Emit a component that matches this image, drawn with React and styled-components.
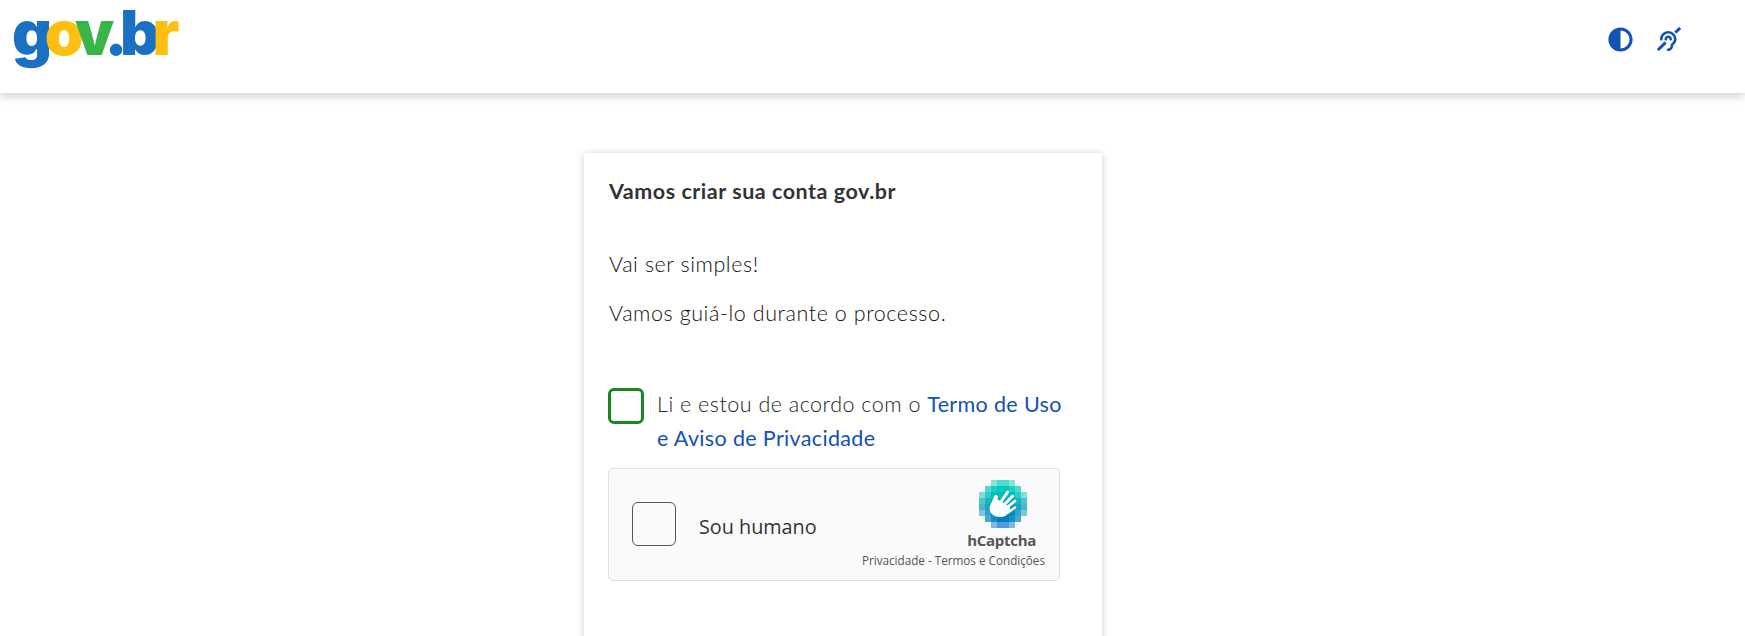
import React from "react";
import styled, { createGlobalStyle } from "styled-components";
import { FaAdjust, FaDeaf } from "react-icons/fa";

const GlobalStyle = createGlobalStyle`
  html, body {
    margin: 0;
    height: 100%;
    overflow: hidden;
    background: #fff;
  }
  * {
    box-sizing: border-box;
  }
`;

const Page = styled.div`
  height: 636px;
  overflow: hidden;
  font-family: Lato, "Open Sans", sans-serif;
  color: #333;
`;

const Header = styled.header`
  height: 93px;
  display: flex;
  justify-content: space-between;
  padding: 0 64px 0 12px;
  background: #fff;
  box-shadow: 0 3px 9px rgba(0, 0, 0, 0.2);
`;

const Logo = styled.div`
  font-family: Inter, "Liberation Sans", sans-serif;
  font-size: 62px;
  font-weight: 900;
  line-height: 66px;
  letter-spacing: -7.5px;
`;

const LogoPart = styled.span`
  color: ${(p) => p.$color};
`;

const Tools = styled.div`
  display: flex;
  gap: 24px;
  padding-top: 27px;
  color: #1351b4;
  font-size: 24px;
`;

const ContrastIcon = styled(FaAdjust)`
  font-size: 25px;
`;

const Main = styled.main`
  padding: 60px 0 0 584px;
`;

const Card = styled.section`
  width: 518px;
  height: 600px;
  padding: 25px 25px 25px 24px;
  background: #fff;
  box-shadow: 0 1px 8px rgba(0, 0, 0, 0.2);
`;

const Title = styled.h1`
  margin: 0 0 47px 1px;
  font-size: 21.5px;
  font-weight: 700;
  letter-spacing: 0.53px;
  line-height: 26px;
`;

const Paragraph = styled.p`
  margin: 0 0 23px 1px;
  font-size: 21.5px;
  font-weight: 300;
  letter-spacing: 0.57px;
  line-height: 26px;
  color: #111;
`;

const TermsRow = styled.div`
  display: flex;
  gap: 13px;
  margin-top: 62px;
`;

const CheckBox = styled.span`
  flex: none;
  width: 36px;
  height: 36px;
  border: 3px solid #168821;
  border-radius: 6px;
`;

const TermsText = styled.p`
  margin: 0;
  font-size: 21.5px;
  font-weight: 300;
  letter-spacing: 0.5px;
  line-height: 33.5px;
  color: #222;
`;

const TermsLink = styled.a`
  font-weight: 400;
  letter-spacing: 0.35px;
  color: #1351b4;
`;

const Captcha = styled.div`
  width: 452px;
  height: 113px;
  margin-top: 13px;
  display: flex;
  align-items: center;
  padding: 0 14px 0 23px;
  background: #fafafa;
  border: 1px solid #e0e0e0;
  border-radius: 5px;
  font-family: "Open Sans", sans-serif;
`;

const CaptchaCheck = styled.span`
  width: 44px;
  height: 44px;
  margin-bottom: 1px;
  background: #fafafa;
  border: 1px solid #555;
  border-radius: 6px;
`;

const CaptchaLabel = styled.span`
  margin: 3px 0 0 23px;
  font-size: 19.8px;
  color: #333;
`;

const CaptchaBrand = styled.div`
  margin: 0 0 2px auto;
  display: flex;
  flex-direction: column;
  align-items: flex-end;
`;

const BrandMark = styled.svg`
  margin-right: 18px;
`;

const BrandName = styled.span`
  margin: 2px 9px 0 0;
  font-size: 15px;
  font-weight: 700;
  letter-spacing: -0.3px;
  line-height: 20px;
  color: #555;
`;

const BrandLinks = styled.span`
  margin-top: 2px;
  font-size: 11.7px;
  line-height: 16px;
  color: #555;
`;

const rows = [
  { from: 2, colors: ["#80e6dc", "#4ddbcf", "#4ddbcf", "#80e6dc"] },
  { from: 1, colors: ["#4dd9cf", "#1acfc3", "#00c8bb", "#00c8bb", "#1acfc3", "#4dd9cf"] },
  { from: 0, colors: ["#80dfdc", "#33c9c4", "#00c0b8", "#00bdb8", "#00bdb8", "#00c0b8", "#33c9c4", "#80dfdc"] },
  { from: 0, colors: ["#4dc6c9", "#1ab5bd", "#00aeb8", "#00aab8", "#00aab8", "#00aeb8", "#1ab5bd", "#4dc6c9"] },
  { from: 0, colors: ["#4db5cc", "#1aa3c0", "#009cba", "#0098ba", "#0098ba", "#009cba", "#1aa3c0", "#4db5cc"] },
  { from: 0, colors: ["#80c4dd", "#33a3cc", "#0090c0", "#008cc0", "#008cc0", "#0090c0", "#33a3cc", "#80c4dd"] },
  { from: 1, colors: ["#4da6d3", "#1a8ec8", "#0080c0", "#0080c0", "#1a8ec8", "#4da6d3"] },
  { from: 2, colors: ["#80b8e0", "#4d9ed4", "#4d9ed4", "#80b8e0"] },
];

function HCaptchaMark() {
  return (
    <BrandMark width="48" height="48" viewBox="0 0 48 48" aria-hidden="true">
      {rows.map((row, y) =>
        row.colors.map((color, x) => (
          <rect key={`${y}-${x}`} x={(row.from + x) * 6} y={y * 6} width="6" height="6" fill={color} />
        ))
      )}
      <g stroke="#fff" strokeLinecap="round" fill="none">
        <path d="M12.7 27.3 L17 17" strokeWidth="4" />
        <path d="M19.3 25.7 L28.7 12" strokeWidth="3" />
        <path d="M22.7 27.3 L33.7 16" strokeWidth="3" />
        <path d="M26 29 L36 21" strokeWidth="2.8" />
        <path d="M29.3 32.3 L36 27.5" strokeWidth="2.6" />
      </g>
      <path d="M11 27 L18 19 L31 27 C31 34 26 37.5 20 37 C14 36.5 9.5 32 11 27 Z" fill="#fff" />
    </BrandMark>
  );
}

export default function App() {
  return (
    <Page>
      <GlobalStyle />
      <Header>
        <Logo>
          <LogoPart $color="#1a71c4">g</LogoPart>
          <LogoPart $color="#fdbf10">o</LogoPart>
          <LogoPart $color="#38b54a">v</LogoPart>
          <LogoPart $color="#1a71c4">.b</LogoPart>
          <LogoPart $color="#fdbf10">r</LogoPart>
        </Logo>
        <Tools>
          <ContrastIcon />
          <FaDeaf />
        </Tools>
      </Header>
      <Main>
        <Card>
          <Title>Vamos criar sua conta gov.br</Title>
          <Paragraph>Vai ser simples!</Paragraph>
          <Paragraph>Vamos guiá-lo durante o processo.</Paragraph>
          <TermsRow>
            <CheckBox />
            <TermsText>
              Li e estou de acordo com o <TermsLink>Termo de Uso e Aviso de Privacidade</TermsLink>
            </TermsText>
          </TermsRow>
          <Captcha>
            <CaptchaCheck />
            <CaptchaLabel>Sou humano</CaptchaLabel>
            <CaptchaBrand>
              <HCaptchaMark />
              <BrandName>hCaptcha</BrandName>
              <BrandLinks>Privacidade - Termos e Condições</BrandLinks>
            </CaptchaBrand>
          </Captcha>
        </Card>
      </Main>
    </Page>
  );
}
